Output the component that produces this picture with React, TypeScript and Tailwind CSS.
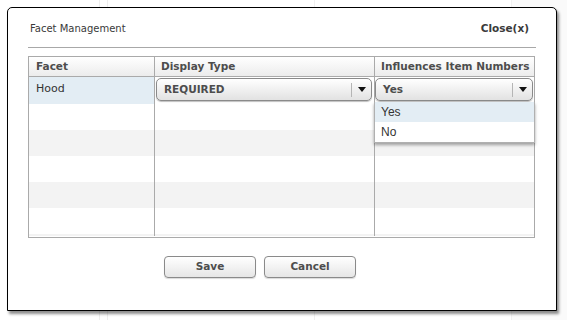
const font = "font-['DejaVu_Sans','Liberation_Sans',sans-serif]";

function Select({ value, className }: { value: string; className?: string }) {
  return (
    <div
      className={`flex h-[23px] items-center rounded-[5px] border border-[#8a8a8a] bg-gradient-to-b from-white to-[#e2e2e2] shadow-[0_1px_1px_rgba(0,0,0,0.25)] ${className ?? ""}`}
    >
      <span className="flex-1 pl-[7px] text-[10.5px] font-bold text-[#4d4d4d]">{value}</span>
      <span className="h-[14px] w-px bg-[#b5b5b5]" />
      <span className="flex w-[19px] justify-center">
        <svg width="8" height="5" viewBox="0 0 8 5">
          <path d="M0 0h8L4 5z" fill="#111" />
        </svg>
      </span>
    </div>
  );
}

function Button({ children }: { children: string }) {
  return (
    <button
      type="button"
      className="h-[22px] w-[92px] rounded-[4px] border border-[#8a8a8a] bg-gradient-to-b from-white to-[#e6e6e6] text-[10.5px] font-bold text-[#4d4d4d] shadow-[0_1px_1px_rgba(0,0,0,0.15)]"
    >
      {children}
    </button>
  );
}

const rows = ["bg-white", "bg-[#f3f3f3]", "bg-white", "bg-[#f3f3f3]", "bg-white"];

export default function App() {
  return (
    <div className={`relative h-[320px] w-[567px] overflow-hidden bg-white ${font}`}>
      {/* page underneath */}
      <div className="flex h-full">
        <div className="w-[100px] border-r border-[#eee]" />
        <div className="w-[8px] border-r border-[#eee]" />
        <div className="w-[207px] border-r border-[#f0f0f0]" />
        <div className="w-[197px] border-r border-[#f0f0f0]" />
        <div className="flex-1 bg-[#fafafa]" />
      </div>

      <div className="absolute left-[7px] top-[7px] flex h-[304px] w-[550px] flex-col rounded-t-[5px] border-[1.5px] border-black bg-white px-[20px] shadow-[2px_3px_3px_rgba(0,0,0,0.45)]">
        <div className="flex h-[40px] items-center justify-between border-b border-[#a8a8a8] pl-[2px] pr-[7px] pt-[2px]">
          <span className="text-[10px] text-[#3a3a3a]">Facet Management</span>
          <span className="text-[10.5px] font-bold text-[#3a3a3a]">Close(x)</span>
        </div>

        <div className="relative mt-[8px] h-[182px] w-[507px] border border-[#aaa]">
          <div className="grid h-[20px] grid-cols-[125px_220px_1fr] whitespace-nowrap border-b border-[#aaa] bg-gradient-to-b from-white to-[#ececec] text-[10.5px] font-bold text-[#4d4d4d]">
            <div className="flex items-center pl-[7px]">Facet</div>
            <div className="flex items-center border-l border-[#aaa] pl-[6px]">Display Type</div>
            <div className="flex items-center border-l border-[#aaa] pl-[6px]">Influences Item Numbers</div>
          </div>
          <div className="grid h-[27px] grid-cols-[125px_220px_1fr]">
            <div className="bg-[#e3edf4] pl-[7px] pt-[4px] text-[11px] text-[#333]">Hood</div>
            <div className="border-l border-[#aaa] pl-px pr-[2px] pt-px">
              <Select value="REQUIRED" />
            </div>
            <div className="border-l border-[#aaa] pr-px pt-px">
              <Select value="Yes" />
            </div>
          </div>
          {rows.map((bg, i) => (
            <div key={i} className={`grid h-[26px] grid-cols-[125px_220px_1fr] ${bg}`}>
              <div />
              <div className="border-l border-[#aaa]" />
              <div className="border-l border-[#aaa]" />
            </div>
          ))}
          <div className="grid h-[2px] grid-cols-[125px_220px_1fr] bg-[#f3f3f3]">
            <div />
            <div className="border-l border-[#aaa]" />
            <div className="border-l border-[#aaa]" />
          </div>

          <div className="absolute left-[345px] top-[45px] w-[161px] border border-t-0 border-[#b0b0b0] bg-white font-['Liberation_Sans',sans-serif] text-[12px] text-[#333] shadow-[0_2px_3px_rgba(0,0,0,0.35)]">
            <div className="flex h-[20px] items-center bg-[#e3edf4] pl-[6px]">Yes</div>
            <div className="flex h-[20px] items-center pl-[6px]">No</div>
          </div>
        </div>

        <div className="mt-[18px] flex gap-[8px] pl-[136px]">
          <Button>Save</Button>
          <Button>Cancel</Button>
        </div>
      </div>
    </div>
  );
}
